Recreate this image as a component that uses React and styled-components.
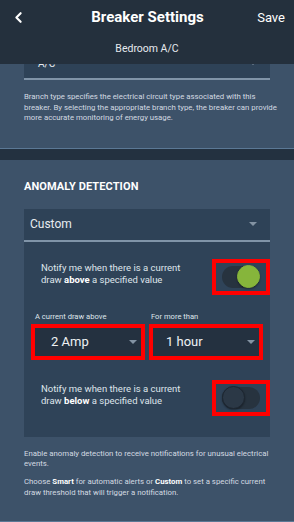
import React from "react";
import styled, { createGlobalStyle } from "styled-components";
import { ChevronLeft } from "lucide-react";

const GlobalStyle = createGlobalStyle`
  html, body {
    margin: 0;
    padding: 0;
    background: #3d5269;
  }
  body {
    font-family: Roboto, "Liberation Sans", sans-serif;
    color: #e4e9ee;
  }
  * {
    box-sizing: border-box;
  }
`;

const Screen = styled.div`
  width: 294px;
  height: 522px;
  overflow: hidden;
  background: #3d5269;
  display: flex;
  flex-direction: column;
`;

const Header = styled.header`
  position: relative;
  z-index: 2;
  height: 64px;
  flex-shrink: 0;
  background: #24303d;
  display: flex;
  flex-direction: column;
  align-items: stretch;
`;

const TopRow = styled.div`
  height: 33px;
  display: flex;
  align-items: center;
  justify-content: space-between;
  padding: 1px 9px 0 10px;
`;

const BackButton = styled.button`
  background: none;
  border: none;
  padding: 0;
  width: 40px;
  color: #ffffff;
  display: flex;
  align-items: center;
`;

const Title = styled.h1`
  margin: 0;
  font-size: 15px;
  font-weight: 700;
  color: #ffffff;
`;

const SaveButton = styled.button`
  background: none;
  border: none;
  padding: 0;
  width: 40px;
  text-align: right;
  font-family: inherit;
  font-size: 13px;
  color: #ffffff;
`;

const Subtitle = styled.div`
  text-align: center;
  font-size: 10.5px;
  color: #e6eaee;
  padding-top: 9px;
`;

const Section = styled.section`
  padding: 0 24px ${(p) => p.$bottom || 0}px;
  border-bottom: ${(p) => (p.$divider ? "1px solid #5b7895" : "none")};
  flex: ${(p) => (p.$fill ? 1 : "none")};
`;

const Band = styled.div`
  height: 11px;
  background: #233140;
  flex-shrink: 0;
`;

const Select = styled.div`
  height: ${(p) => p.$height}px;
  margin-top: ${(p) => p.$offset || 0}px;
  display: flex;
  align-items: center;
  justify-content: space-between;
  padding: 0 13px 0 ${(p) => p.$padLeft || 6}px;
  background: ${(p) => p.$bg || "#2e4257"};
  border-bottom: ${(p) => (p.$line ? "2px solid #8094a8" : "none")};
  font-size: ${(p) => p.$size || 12}px;
  color: #e8ecf0;
`;

const Caret = styled.span`
  width: 0;
  height: 0;
  border-left: 4px solid transparent;
  border-right: 4px solid transparent;
  border-top: 4px solid #8393a3;
`;

const Help = styled.p`
  margin: ${(p) => p.$top || 0}px 0 0;
  font-size: 7.8px;
  line-height: 10.6px;
  white-space: nowrap;
  color: #d3dae2;
  b {
    font-weight: 700;
    color: #ffffff;
  }
`;

const Heading = styled.h2`
  margin: 0;
  padding-top: 20px;
  font-size: 11px;
  font-weight: 700;
  color: #ffffff;
  letter-spacing: 0.1px;
`;

const Card = styled.div`
  margin-top: 16px;
  background: #2f4358;
  display: flex;
  flex-direction: column;
`;

const CardBody = styled.div`
  padding: 17px 0 21px;
  display: flex;
  flex-direction: column;
`;

const ToggleRow = styled.div`
  display: flex;
  align-items: center;
  justify-content: space-between;
  padding-left: 17px;
  margin-top: ${(p) => p.$top || 0}px;
`;

const ToggleText = styled.div`
  width: 150px;
  margin-top: -6px;
  font-size: 9.5px;
  line-height: 12px;
  color: #dfe5eb;
  b {
    font-weight: 700;
    color: #ffffff;
  }
`;

const Highlight = styled.div`
  border: 4px solid #ff0000;
  display: flex;
  align-items: center;
  justify-content: center;
`;

const ToggleFrame = styled(Highlight)`
  width: 58px;
  height: 36px;
`;

const Track = styled.div`
  width: 38px;
  height: 22px;
  border-radius: 11px;
  background: #27333f;
  display: flex;
  align-items: center;
  justify-content: ${(p) => (p.$on ? "flex-end" : "flex-start")};
`;

const Knob = styled.div`
  width: 23px;
  height: 23px;
  border-radius: 50%;
  background: ${(p) => (p.$on ? "#86b53b" : "#2b3846")};
  border: 1px solid ${(p) => (p.$on ? "#86b53b" : "#1d2631")};
  box-shadow: 0 1px 2px rgba(0, 0, 0, 0.35);
`;

const Fields = styled.div`
  display: grid;
  grid-template-columns: 114px 114px;
  column-gap: 4px;
  padding-left: 7px;
  margin-top: 17px;
`;

const Field = styled.div`
  display: flex;
  flex-direction: column;
`;

const FieldLabel = styled.label`
  font-size: 7.6px;
  color: #dfe5eb;
  padding-left: ${(p) => p.$pad || 4}px;
  margin-bottom: 3px;
`;

const FieldFrame = styled(Highlight)`
  height: 36px;
  justify-content: stretch;
  align-items: stretch;
`;

const FieldSelect = styled.div`
  flex: 1;
  background: #243140;
  display: flex;
  align-items: center;
  justify-content: space-between;
  padding: 0 4px 0 ${(p) => p.$pad || 16}px;
  font-size: 13px;
  color: #eef1f4;
`;

const Switch = ({ on }) => (
  <ToggleFrame>
    <Track $on={on}>
      <Knob $on={on} />
    </Track>
  </ToggleFrame>
);

export default function App() {
  return (
    <>
      <GlobalStyle />
      <Screen>
        <Header>
          <TopRow>
            <BackButton>
              <ChevronLeft size={17} strokeWidth={3} />
            </BackButton>
            <Title>Breaker Settings</Title>
            <SaveButton>Save</SaveButton>
          </TopRow>
          <Subtitle>Bedroom A/C</Subtitle>
        </Header>

        <Section $divider $bottom={24}>
          <Select $height={32} $offset={-16} $line $padLeft={14} $size={10}>
            A/C
            <Caret />
          </Select>
          <Help $top={12}>
            Branch type specifies the electrical circuit type associated with
            this
            <br />
            breaker. By selecting the appropriate branch type, the breaker can
            provide
            <br />
            more accurate monitoring of energy usage.
          </Help>
        </Section>
        <Band />

        <Section $divider $fill>
          <Heading>ANOMALY DETECTION</Heading>
          <Card>
            <Select $height={33} $line>
              Custom
              <Caret />
            </Select>
            <CardBody>
              <ToggleRow>
                <ToggleText>
                  Notify me when there is a current draw <b>above</b> a
                  specified value
                </ToggleText>
                <Switch on />
              </ToggleRow>

              <Fields>
                <Field>
                  <FieldLabel>A current draw above</FieldLabel>
                  <FieldFrame>
                    <FieldSelect>
                      2 Amp
                      <Caret />
                    </FieldSelect>
                  </FieldFrame>
                </Field>
                <Field>
                  <FieldLabel $pad={2}>For more than</FieldLabel>
                  <FieldFrame>
                    <FieldSelect $pad={13}>
                      1 hour
                      <Caret />
                    </FieldSelect>
                  </FieldFrame>
                </Field>
              </Fields>

              <ToggleRow $top={20}>
                <ToggleText>
                  Notify me when there is a current draw <b>below</b> a
                  specified value
                </ToggleText>
                <Switch on={false} />
              </ToggleRow>
            </CardBody>
          </Card>
          <Help $top={12}>
            Enable anomaly detection to receive notifications for unusual
            electrical
            <br />
            events.
          </Help>
          <Help $top={7}>
            Choose <b>Smart</b> for automatic alerts or <b>Custom</b> to set a
            specific current
            <br />
            draw threshold that will trigger a notification.
          </Help>
        </Section>
      </Screen>
    </>
  );
}
